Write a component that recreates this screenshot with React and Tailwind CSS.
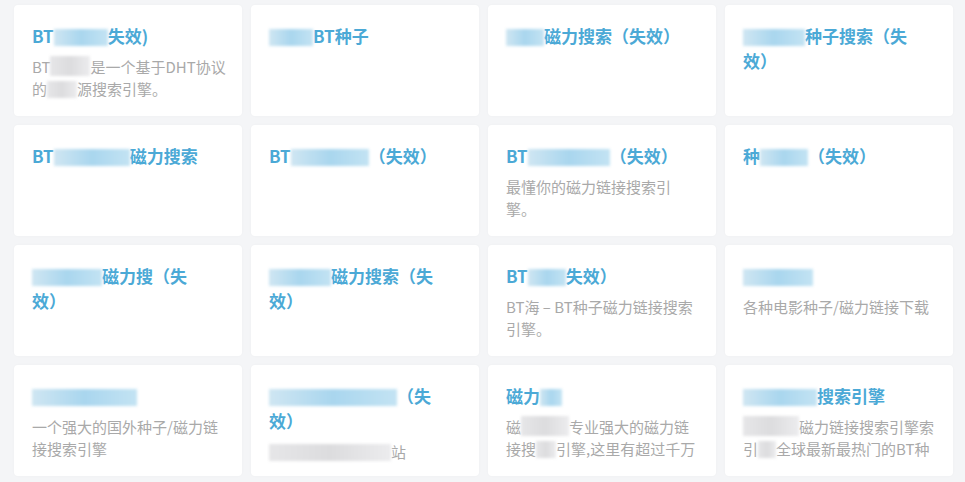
import React from "react";

// mosaic patches that hide names in the screenshot
const Blur = ({ w, tone = "blue", h = 17 }) => (
  <span
    className={`inline-block align-[-3px] blur-[1.5px] ${
      tone === "blue"
        ? "bg-gradient-to-r from-[#cfe6f2] via-[#a9d6ee] to-[#c3e3f3]"
        : "bg-gradient-to-r from-[#e6e6e8] via-[#dcdcde] to-[#ececee]"
    }`}
    style={{ width: w, height: h }}
  />
);

const cards = [
  {
    title: [["BT", <Blur w={54} />, "失效)"]],
    desc: [
      ["BT", <Blur w={40} tone="gray" h={20} />, "是一个基于DHT协议"],
      ["的", <Blur w={30} tone="gray" />, "源搜索引擎。"],
    ],
  },
  { title: [[<Blur w={44} />, "BT种子"]] },
  { title: [[<Blur w={38} />, "磁力搜索（失效）"]] },
  { title: [[<Blur w={62} />, "种子搜索（失"], ["效）"]] },
  { title: [["BT", <Blur w={76} />, "磁力搜索"]] },
  { title: [["BT", <Blur w={78} />, "（失效）"]] },
  {
    title: [["BT", <Blur w={82} />, "（失效）"]],
    desc: [["最懂你的磁力链接搜索引"], ["擎。"]],
  },
  { title: [["种", <Blur w={48} />, "（失效）"]] },
  { title: [[<Blur w={70} />, "磁力搜（失"], ["效）"]] },
  { title: [[<Blur w={62} />, "磁力搜索（失"], ["效）"]] },
  {
    title: [["BT", <Blur w={38} />, "失效）"]],
    desc: [["BT海 – BT种子磁力链接搜索"], ["引擎。"]],
  },
  {
    title: [[<Blur w={70} />]],
    desc: [["各种电影种子/磁力链接下载"]],
  },
  {
    title: [[<Blur w={105} />]],
    desc: [["一个强大的国外种子/磁力链"], ["接搜索引擎"]],
  },
  {
    title: [[<Blur w={128} />, "（失"], ["效）"]],
    desc: [[<Blur w={122} tone="gray" />, "站"]],
  },
  {
    title: [["磁力", <Blur w={22} />]],
    desc: [
      ["磁", <Blur w={48} tone="gray" h={20} />, "专业强大的磁力链"],
      ["接搜", <Blur w={20} tone="gray" />, "引擎,这里有超过千万"],
    ],
  },
  {
    title: [[<Blur w={74} />, "搜索引擎"]],
    desc: [
      [<Blur w={56} tone="gray" h={20} />, "磁力链接搜索引擎索"],
      ["引", <Blur w={18} tone="gray" />, "全球最新最热门的BT种"],
    ],
  },
];

const Line = ({ parts }) => (
  <div className="whitespace-nowrap">
    {parts.map((p, i) => (
      <React.Fragment key={i}>{p}</React.Fragment>
    ))}
  </div>
);

const Card = ({ title, desc }) => (
  <div className="h-[111px] rounded-[4px] bg-white pl-[18px] pr-[20px] pt-[18px] shadow-[0_0_3px_rgba(0,0,0,0.03)]">
    <div className="text-[17px] font-bold leading-[25px] text-[#4ba9d6]">
      {title.map((l, i) => (
        <Line key={i} parts={l} />
      ))}
    </div>
    {desc && (
      <div className="mt-[8px] text-[15px] leading-[22px] text-[#a9a9a9]">
        {desc.map((l, i) => (
          <Line key={i} parts={l} />
        ))}
      </div>
    )}
  </div>
);

export default function App() {
  return (
    <div
      className="min-h-screen w-full bg-[#f4f5f7] pb-[6px] pl-[14px] pr-[12px] pt-[5px]"
      style={{ fontFamily: '"Noto Sans CJK SC", "Noto Sans", sans-serif' }}
    >
      <div className="grid grid-cols-4 gap-[9px]">
        {cards.map((c, i) => (
          <Card key={i} {...c} />
        ))}
      </div>
    </div>
  );
}
